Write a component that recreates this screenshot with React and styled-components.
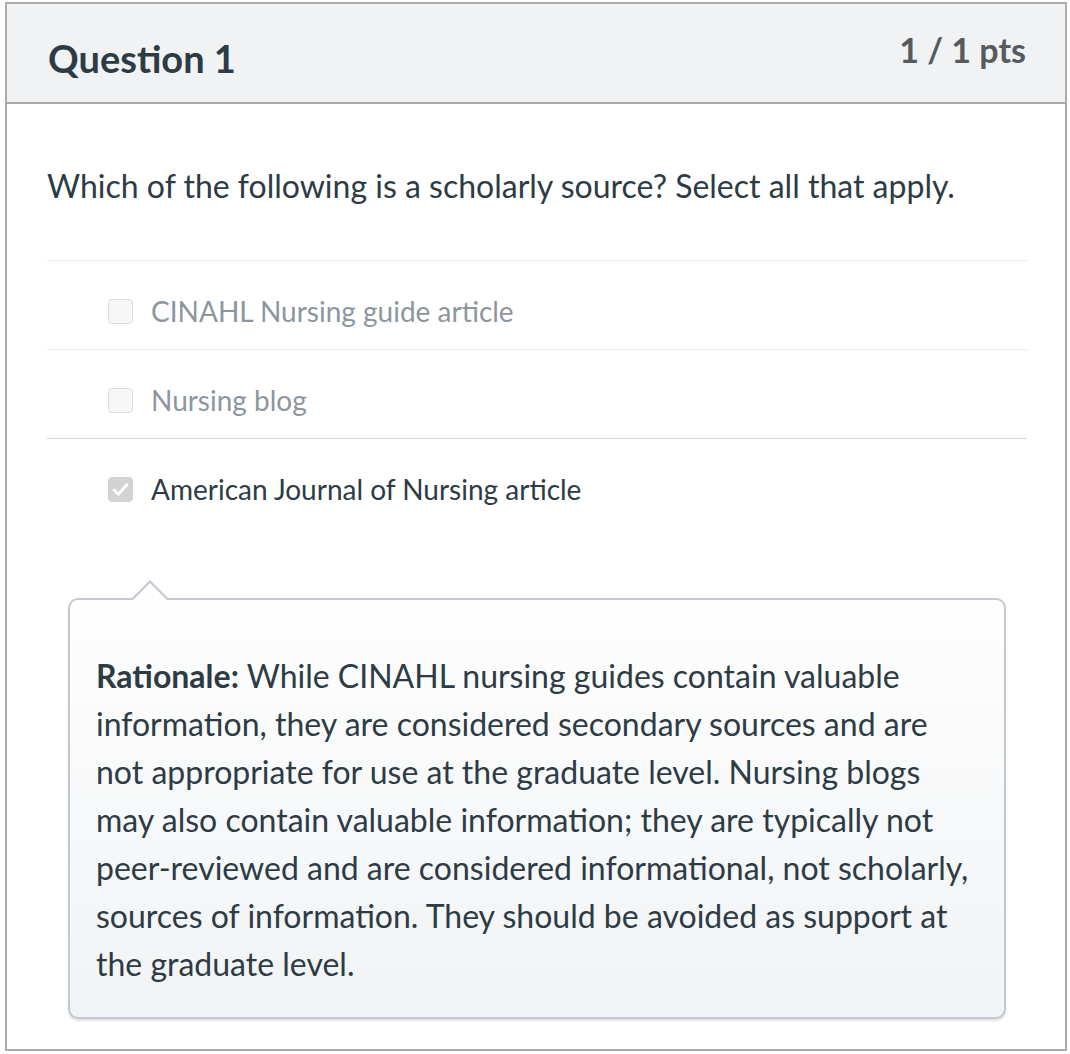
import React from "react";
import styled, { createGlobalStyle } from "styled-components";

const Global = createGlobalStyle`
  body {
    margin: 0;
    padding: 2px 0 0 5px;
    background: #fff;
    font-family: Lato, "Noto Sans", sans-serif;
    color: #2d3b45;
  }
`;

const Card = styled.div`
  box-sizing: border-box;
  width: 1062px;
  border: 2px solid #ababab;
`;

const Header = styled.div`
  display: flex;
  justify-content: space-between;
  align-items: flex-start;
  height: 100px;
  padding: 0 39px 0 41px;
  box-sizing: border-box;
  background: #f1f2f3;
  border-bottom: 2px solid #ababab;
`;

const Title = styled.h2`
  margin: 31px 0 0;
  font-size: 38px;
  font-weight: 700;
  line-height: 46px;
  color: #2d3b45;
`;

const Points = styled.div`
  margin-top: 26px;
  font-size: 34px;
  font-weight: 700;
  line-height: 40px;
  color: #555a5e;
`;

const Body = styled.div`
  padding: 62px 38px 30px 40px;
`;

const Prompt = styled.p`
  margin: 0 0 54px;
  font-size: 32px;
  line-height: 40px;
`;

const Answers = styled.div`
  display: flex;
  flex-direction: column;
`;

const Row = styled.label`
  display: flex;
  align-items: center;
  gap: 18px;
  min-height: 89px;
  padding: 12px 0 0 61px;
  box-sizing: border-box;
  border-top: 1px solid ${(p) => (p.$strong ? "#d4d6d8" : "#e6e8ea")};
  font-size: 28px;
  color: ${(p) => (p.$selected ? "#2d3b45" : "#8d969c")};
`;

const Box = styled.span`
  display: inline-flex;
  align-items: center;
  justify-content: center;
  width: 25px;
  height: 25px;
  box-sizing: border-box;
  border-radius: 4px;
  border: 1px solid ${(p) => (p.$checked ? "#d3d3d3" : "#dcdcdc")};
  background: ${(p) => (p.$checked ? "#d3d3d3" : "#f7f7f7")};
`;

const Comment = styled.div`
  position: relative;
  margin: 71px 21px 0;
  padding: 52px 30px 29px 26px;
  border: 2px solid #c3c9ce;
  border-radius: 10px;
  background: linear-gradient(#fefefe, #f1f3f5);
  box-shadow: 0 2px 2px rgba(0, 0, 0, 0.12);
  font-size: 32px;
  line-height: 48px;
  color: #2d3b45;

  &::before,
  &::after {
    content: "";
    position: absolute;
    left: 62px;
    width: 0;
    height: 0;
    border-left: 18px solid transparent;
    border-right: 18px solid transparent;
  }
  &::before {
    top: -20px;
    border-bottom: 18px solid #c3c9ce;
  }
  &::after {
    top: -17px;
    border-bottom: 17px solid #fefefe;
    left: 63px;
    border-left-width: 17px;
    border-right-width: 17px;
  }
`;

const Check = () => (
  <svg width="19" height="19" viewBox="0 0 18 18">
    <path d="M3 9.5l4 4 8-9" fill="none" stroke="#fff" strokeWidth="2.8" strokeLinecap="round" strokeLinejoin="round" />
  </svg>
);

const answers = [
  { text: "CINAHL Nursing guide article", selected: false },
  { text: "Nursing blog", selected: false },
  { text: "American Journal of Nursing article", selected: true },
];

export default function App() {
  return (
    <>
      <Global />
      <Card>
        <Header>
          <Title>Question 1</Title>
          <Points>1 / 1 pts</Points>
        </Header>
        <Body>
          <Prompt>Which of the following is a scholarly source? Select all that apply.</Prompt>
          <Answers>
            {answers.map((a, i) => (
              <Row key={a.text} $selected={a.selected} $strong={i === 2}>
                <Box $checked={a.selected}>{a.selected && <Check />}</Box>
                {a.text}
              </Row>
            ))}
          </Answers>
          <Comment>
            <strong>Rationale:</strong> While CINAHL nursing guides contain valuable<br />
            information, they are considered secondary sources and are<br />
            not appropriate for use at the graduate level. Nursing blogs<br />
            may also contain valuable information; they are typically not<br />
            peer-reviewed and are considered informational, not scholarly,<br />
            sources of information. They should be avoided as support at<br />
            the graduate level.
          </Comment>
        </Body>
      </Card>
    </>
  );
}
